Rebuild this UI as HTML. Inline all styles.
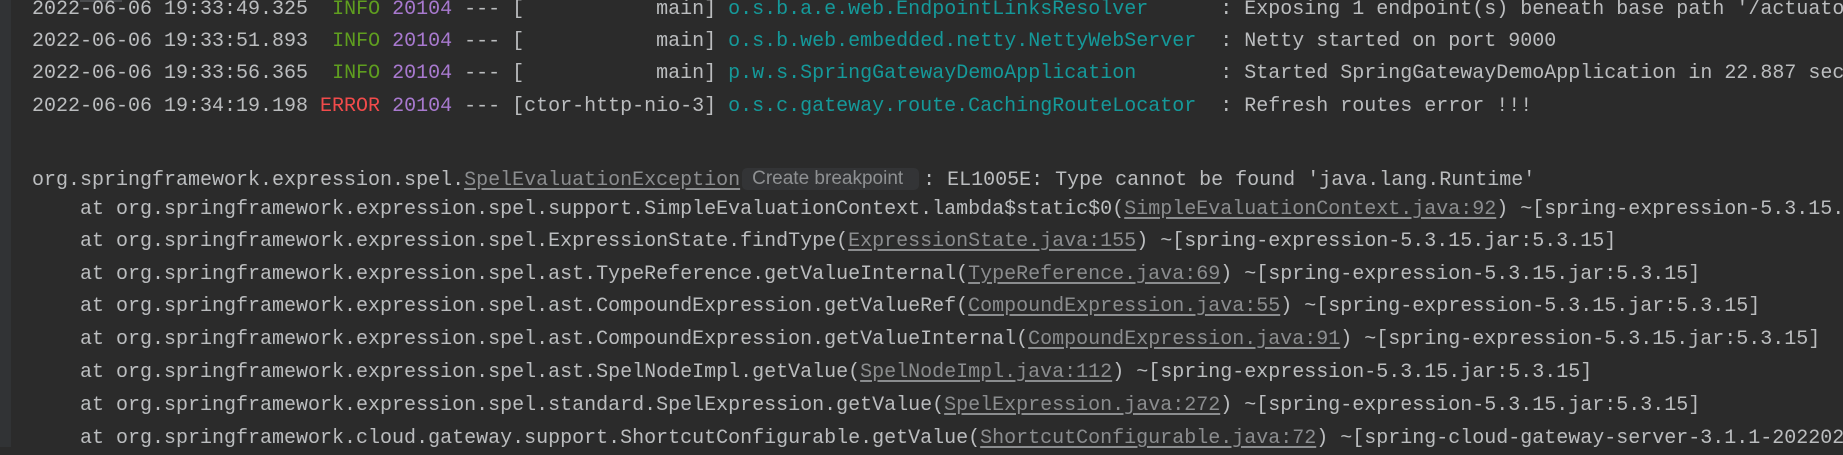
<!DOCTYPE html>
<html><head><meta charset="utf-8"><style>
html,body{margin:0;padding:0;}
body{width:1843px;height:447px;background:#2b2b2b;overflow:hidden;position:relative;font-family:"Liberation Mono",monospace;font-size:20px;color:#bbbdbf;}
.g{position:absolute;left:0;top:0;width:11px;height:447px;background:#313335;}
.tl{position:absolute;left:80px;top:0;width:42px;height:2px;background:#4a4c4e;}
.l{position:absolute;left:32px;white-space:pre;height:32px;line-height:32px;}
.i{color:#5f9e1f}.e{color:#f24b4b}.p{color:#a879cf}.c{color:#15999a}
.u{color:#8b8d8f;text-decoration:underline;text-underline-offset:3px}
.bp{display:inline-block;box-sizing:border-box;width:177px;font-family:"Liberation Sans",sans-serif;font-size:19px;color:#8e9092;background:#333436;border-radius:5px;padding:0 0 0 10px;height:22px;line-height:22px;margin:0 4px 0 2px;vertical-align:1px;}
</style></head><body>
<div class="g"></div><div class="tl"></div>
<div class="l" style="top:-6px">2022-06-06 19:33:49.325  <span class="i">INFO</span> <span class="p">20104</span> --- [           main] <span class="c">o.s.b.a.e.web.EndpointLinksResolver     </span> : Exposing 1 endpoint(s) beneath base path '/actuator'</div>
<div class="l" style="top:26px">2022-06-06 19:33:51.893  <span class="i">INFO</span> <span class="p">20104</span> --- [           main] <span class="c">o.s.b.web.embedded.netty.NettyWebServer </span> : Netty started on port 9000</div>
<div class="l" style="top:58px">2022-06-06 19:33:56.365  <span class="i">INFO</span> <span class="p">20104</span> --- [           main] <span class="c">p.w.s.SpringGatewayDemoApplication      </span> : Started SpringGatewayDemoApplication in 22.887 seconds</div>
<div class="l" style="top:91px">2022-06-06 19:34:19.198 <span class="e">ERROR</span> <span class="p">20104</span> --- [ctor-http-nio-3] <span class="c">o.s.c.gateway.route.CachingRouteLocator </span> : Refresh routes error !!!</div>
<div class="l" style="top:165px">org.springframework.expression.spel.<span class="u">SpelEvaluationException</span><span class="bp">Create breakpoint</span>: EL1005E: Type cannot be found 'java.lang.Runtime'</div>
<div class="l" style="top:194px">    at org.springframework.expression.spel.support.SimpleEvaluationContext.lambda$static$0(<span class="u">SimpleEvaluationContext.java:92</span>) ~[spring-expression-5.3.15.jar:5.3.15]</div>
<div class="l" style="top:226px">    at org.springframework.expression.spel.ExpressionState.findType(<span class="u">ExpressionState.java:155</span>) ~[spring-expression-5.3.15.jar:5.3.15]</div>
<div class="l" style="top:259px">    at org.springframework.expression.spel.ast.TypeReference.getValueInternal(<span class="u">TypeReference.java:69</span>) ~[spring-expression-5.3.15.jar:5.3.15]</div>
<div class="l" style="top:291px">    at org.springframework.expression.spel.ast.CompoundExpression.getValueRef(<span class="u">CompoundExpression.java:55</span>) ~[spring-expression-5.3.15.jar:5.3.15]</div>
<div class="l" style="top:324px">    at org.springframework.expression.spel.ast.CompoundExpression.getValueInternal(<span class="u">CompoundExpression.java:91</span>) ~[spring-expression-5.3.15.jar:5.3.15]</div>
<div class="l" style="top:357px">    at org.springframework.expression.spel.ast.SpelNodeImpl.getValue(<span class="u">SpelNodeImpl.java:112</span>) ~[spring-expression-5.3.15.jar:5.3.15]</div>
<div class="l" style="top:390px">    at org.springframework.expression.spel.standard.SpelExpression.getValue(<span class="u">SpelExpression.java:272</span>) ~[spring-expression-5.3.15.jar:5.3.15]</div>
<div class="l" style="top:423px">    at org.springframework.cloud.gateway.support.ShortcutConfigurable.getValue(<span class="u">ShortcutConfigurable.java:72</span>) ~[spring-cloud-gateway-server-3.1.1-20220201]</div>
</body></html>
